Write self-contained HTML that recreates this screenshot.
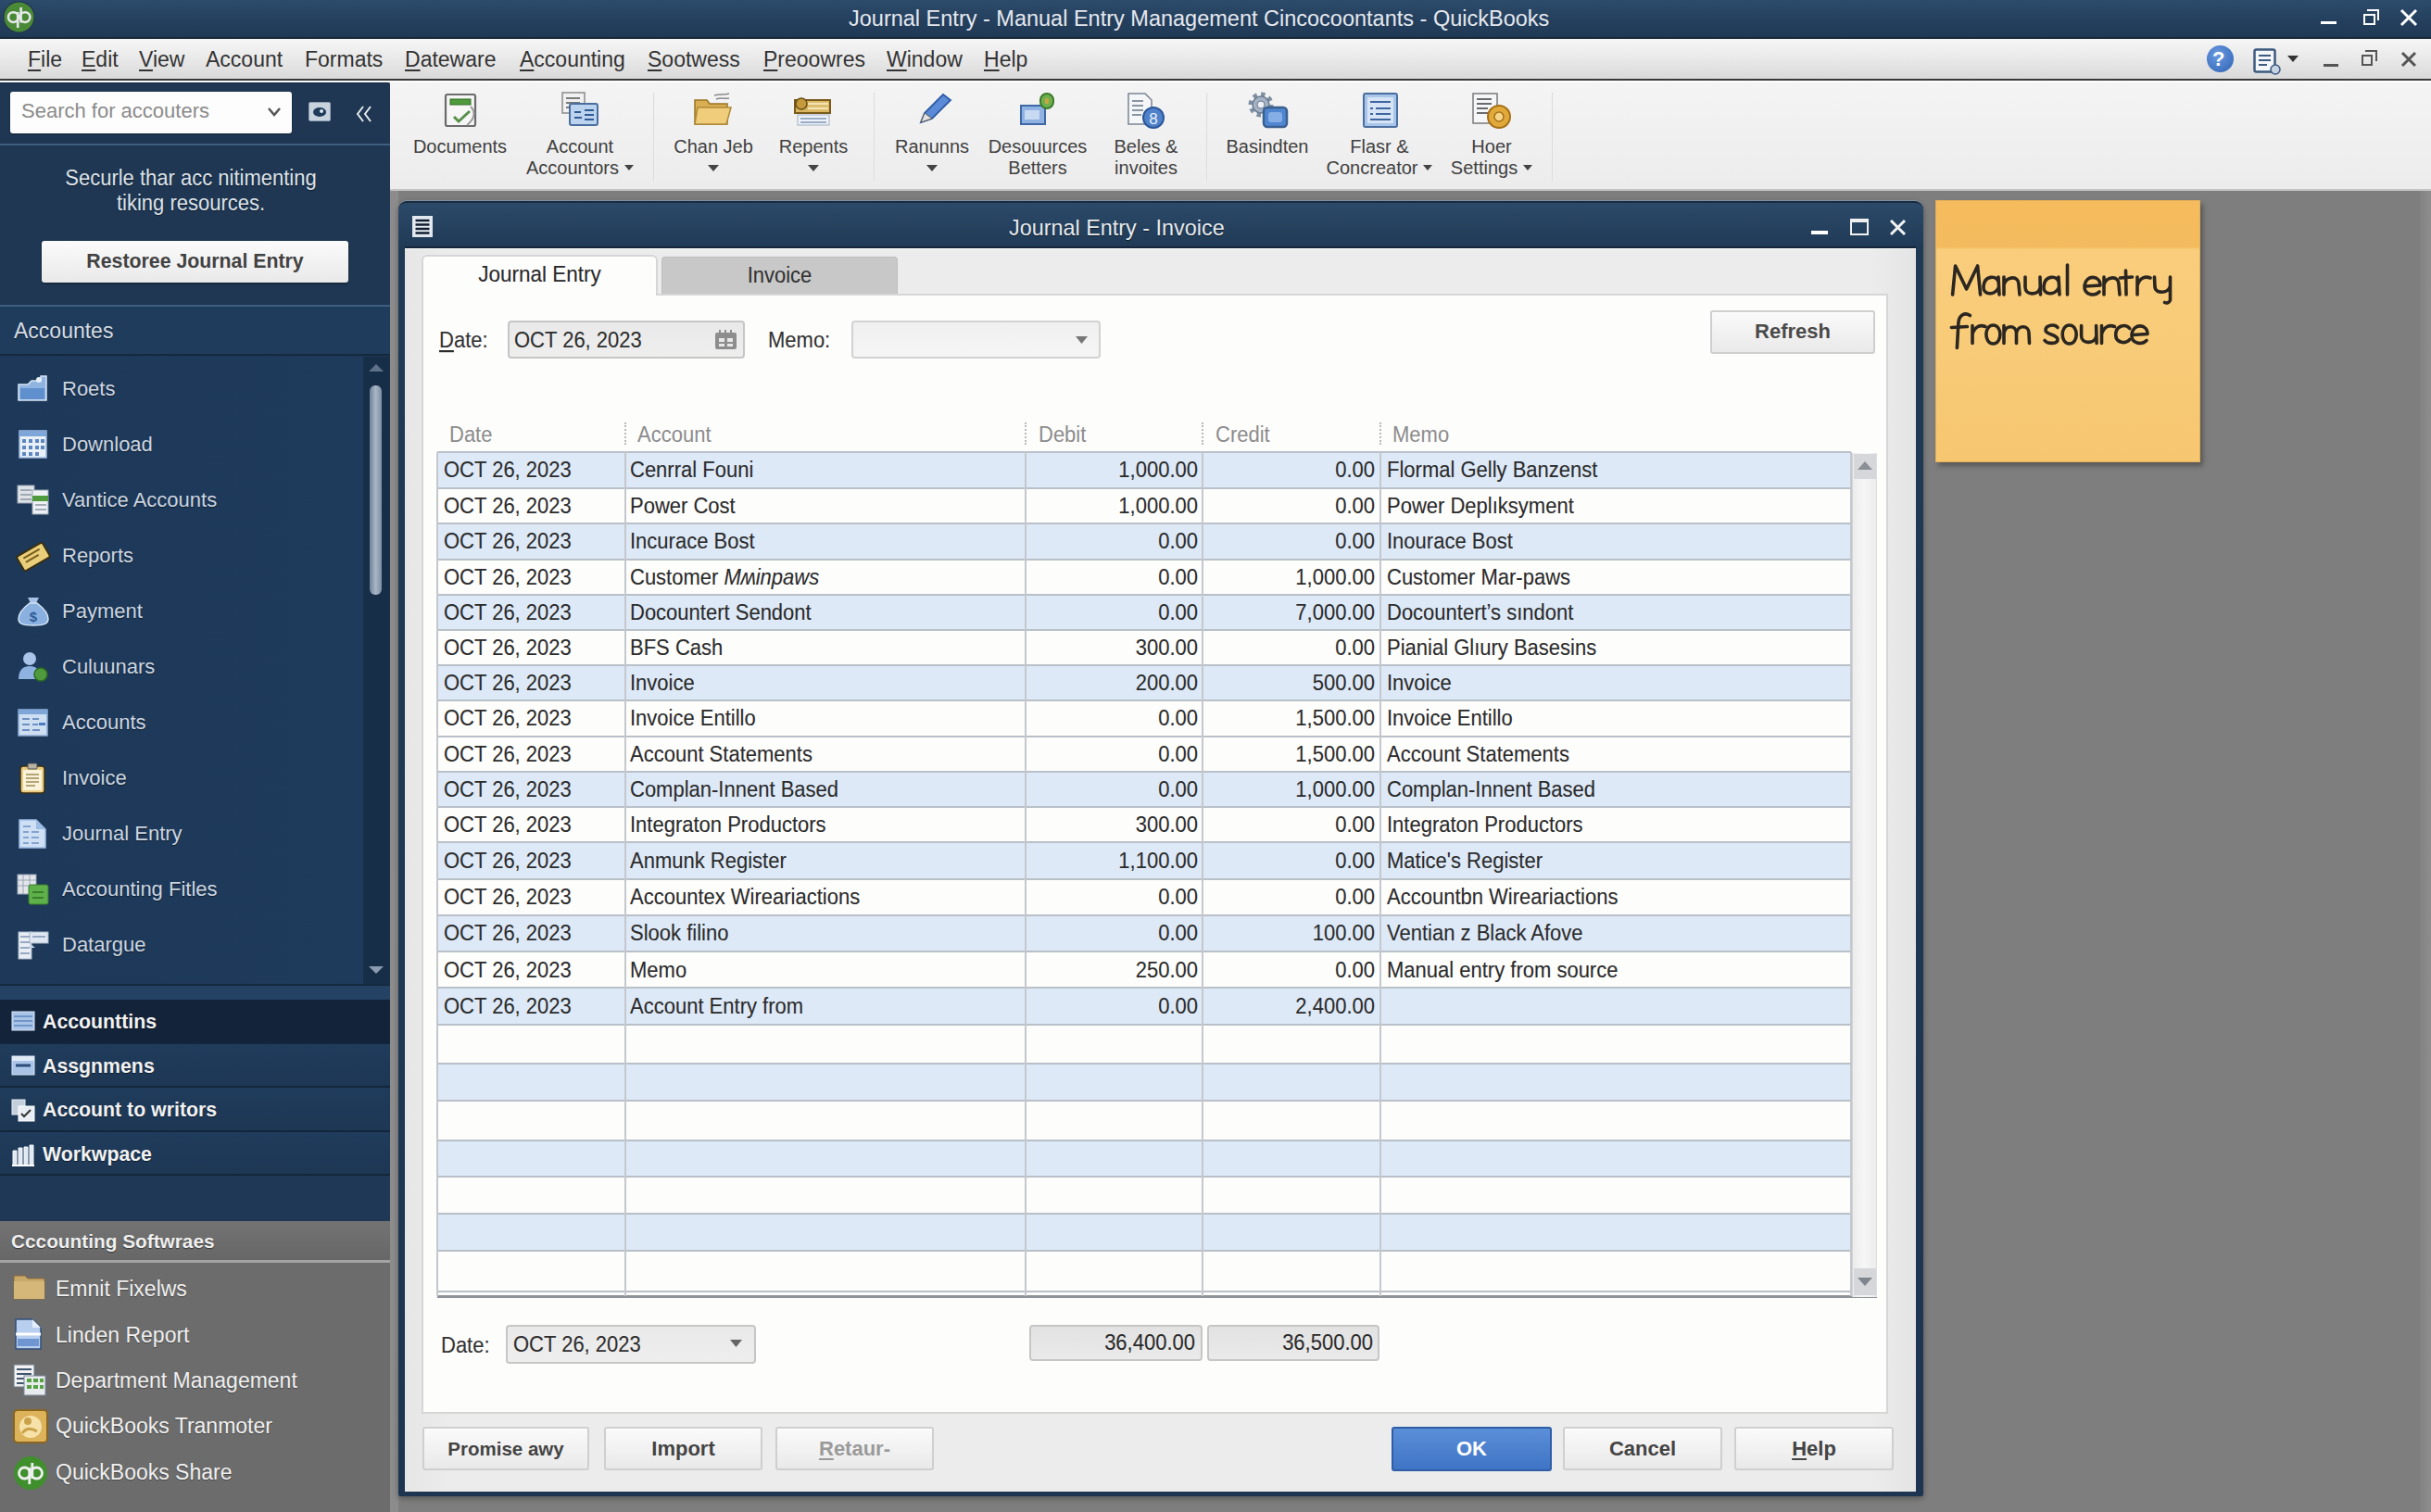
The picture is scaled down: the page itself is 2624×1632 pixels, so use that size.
<!DOCTYPE html>
<html><head><meta charset="utf-8">
<style>
*{box-sizing:border-box;margin:0;padding:0}
html,body{width:2624px;height:1632px;overflow:hidden;background:#7d7d7d;font-family:"Liberation Sans",sans-serif}
.a{position:absolute}
.nw{white-space:nowrap}
svg{position:absolute;overflow:visible}
#title{left:0;top:0;width:2624px;height:42px;background:linear-gradient(#2c4b6b,#243f5d 60%,#1f3955);border-bottom:2px solid #17283a}
#menubar{left:0;top:42px;width:2624px;height:45px;background:linear-gradient(#f6f6f6,#e6e6e6 60%,#d9d9d9);border-bottom:2px solid #3a3a3a}
.mi{top:51px;font-size:23px;line-height:26px;color:#333;white-space:nowrap}
.ul{text-decoration:underline;text-decoration-thickness:2px;text-underline-offset:3px}
#side{left:0;top:89px;width:421px;height:1543px;background:#1f3753;border-radius:0 4px 0 0;box-shadow:inset 0 1px 0 #13263c}
#tool{left:421px;top:87px;width:2203px;height:119px;border-top:2px solid #fdfdfd;background:linear-gradient(#f4f4f4,#ececec);border-bottom:2px solid #c4c4c4}
#maingray{left:421px;top:206px;width:2203px;height:1426px;background:#7e7e7e;border-left:9px solid #8c8c8c}
.st{font-size:22px;line-height:26px;color:#ccd6e1;white-space:nowrap;text-shadow:0 1px 1px rgba(0,0,0,.5)}
.sb{font-size:21.3px;line-height:26px;color:#f2f2f2;white-space:nowrap;font-weight:700;text-shadow:0 1px 1px rgba(0,0,0,.5)}
.sg{font-size:23px;line-height:26px;color:#f0f0f0;white-space:nowrap;text-shadow:0 1px 1px rgba(0,0,0,.35)}
.tt{font-size:20px;line-height:22px;color:#414141;white-space:nowrap;text-align:center}
.dd{display:inline-block;width:0;height:0;border-left:5px solid transparent;border-right:5px solid transparent;border-top:6px solid #444;vertical-align:middle;margin-left:6px;position:relative;top:-2px}
.dt{font-size:22px;line-height:26px;color:#2b2b2b;white-space:nowrap;transform:scaleY(1.1);-webkit-text-stroke:0.1px #2b2b2b}
.hd{font-size:22px;line-height:26px;color:#8c8c8c;white-space:nowrap;transform:scaleY(1.09)}
.btn{background:linear-gradient(#fafafa,#e9e9e9);border:2px solid #cfcfcf;border-radius:3px;box-shadow:inset 0 1px 0 #fff}
.bt{font-size:22px;line-height:26px;font-weight:700;color:#474747;white-space:nowrap;text-align:center}
.fld{background:linear-gradient(#e9e9e9,#eeeeee);border:2px solid #c6c6c6;border-radius:4px}

</style></head><body>
<div id="title" class="a"></div>
<div class="a nw" style="left:916px;top:6px;font-size:23.5px;line-height:28px;color:#e4e8ee">Journal Entry - Manual Entry Management Cincocoontants - QuickBooks</div>
<!-- qb logo -->
<svg style="left:0;top:0" width="42" height="40"><circle cx="20.5" cy="18.4" r="17.2" fill="#22364e"/><circle cx="20.5" cy="18.4" r="16" fill="#4a8a36"/><g fill="none" stroke="#e6e8ea" stroke-width="2.6"><circle cx="14.4" cy="18.6" r="5.4"/><path d="M19.2 13v17"/><circle cx="27" cy="18.6" r="5.4"/><path d="M22.6 8v16.5"/></g></svg>
<!-- window controls -->
<div class="a" style="left:2505px;top:23px;width:17px;height:3px;background:#fff"></div>
<div class="a" style="left:2551px;top:15px;width:13px;height:12px;border:2px solid #fff"></div>
<div class="a" style="left:2555px;top:10px;width:13px;height:12px;border-top:2px solid #fff;border-right:2px solid #fff"></div>
<svg style="left:2591px;top:10px" width="18" height="18"><path d="M1 1L17 17M17 1L1 17" stroke="#fff" stroke-width="3"/></svg>
<div id="menubar" class="a"></div>
<div class="a" style="left:0;top:87px;width:2624px;height:2px;background:#f6f8fa"></div>
<div class="a mi" style="left:30px"><span class="ul">F</span>ile</div>
<div class="a mi" style="left:88px"><span class="ul">E</span>dit</div>
<div class="a mi" style="left:150px"><span class="ul">V</span>iew</div>
<div class="a mi" style="left:222px">Account</div>
<div class="a mi" style="left:329px">Formats</div>
<div class="a mi" style="left:437px"><span class="ul">D</span>ateware</div>
<div class="a mi" style="left:561px"><span class="ul">A</span>ccounting</div>
<div class="a mi" style="left:699px"><span class="ul">S</span>ootwess</div>
<div class="a mi" style="left:824px"><span class="ul">P</span>reoowres</div>
<div class="a mi" style="left:957px"><span class="ul">W</span>indow</div>
<div class="a mi" style="left:1062px"><span class="ul">H</span>elp</div>
<!-- menubar right icons -->
<div class="a" style="left:2382px;top:49px;width:29px;height:29px;border-radius:50%;background:radial-gradient(circle at 40% 35%,#6a9ae0,#2d62b5)"></div>
<div class="a nw" style="left:2388px;top:50px;font-size:22px;font-weight:700;color:#fff;line-height:28px">?</div>
<svg style="left:2432px;top:51px" width="32" height="30"><rect x="1.5" y="2.5" width="22" height="24" rx="2" fill="#f4f6fa" stroke="#3d5a80" stroke-width="2.5"/><path d="M6 9h13M6 14h13M6 19h9" stroke="#3d5a80" stroke-width="2"/><circle cx="24" cy="24" r="5" fill="#c8d4e4" stroke="#3d5a80" stroke-width="1.5"/></svg>
<svg style="left:2469px;top:60px" width="13" height="8"><path d="M0 0h12L6 7z" fill="#333"/></svg>
<div class="a" style="left:2508px;top:69px;width:16px;height:3px;background:#555"></div>
<div class="a" style="left:2549px;top:59px;width:12px;height:12px;border:2px solid #555"></div>
<div class="a" style="left:2553px;top:54px;width:13px;height:12px;border-top:2px solid #555;border-right:2px solid #555"></div>
<svg style="left:2592px;top:56px" width="16" height="16"><path d="M1 1L15 15M15 1L1 15" stroke="#555" stroke-width="3"/></svg>
<div id="side" class="a"></div>
<!-- search -->
<div class="a" style="left:11px;top:99px;width:304px;height:45px;background:#fdfdfd;border-radius:3px;box-shadow:0 1px 2px rgba(0,0,0,.4)"></div>
<div class="a nw" style="left:23px;top:107px;font-size:22px;line-height:26px;color:#8b8b8b">Search for accouters</div>
<svg style="left:289px;top:115px" width="14" height="12"><path d="M1 2L7 9L13 2" stroke="#555" stroke-width="2.5" fill="none"/></svg>
<div class="a" style="left:333px;top:110px;width:24px;height:21px;background:#c9d3de;border-radius:2px;border:1px solid #8fa0b3"></div>
<svg style="left:336px;top:113px" width="18" height="15"><ellipse cx="9" cy="8" rx="7" ry="5" fill="#1e3a5a"/><circle cx="11" cy="7" r="2" fill="#dfe6ee"/></svg>
<svg style="left:384px;top:114px" width="18" height="18"><path d="M8 1L2 9L8 17M16 1L10 9L16 17" stroke="#e6ebf0" stroke-width="2" fill="none"/></svg>
<div class="a" style="left:0;top:155px;width:421px;height:2px;background:#3f5e80"></div>
<div class="a st" style="left:0;top:179px;width:412px;text-align:center;color:#dde3ea;transform:scaleY(1.1)">Securle thar acc nitimenting</div>
<div class="a st" style="left:0;top:206px;width:412px;text-align:center;color:#dde3ea;transform:scaleY(1.1)">tiking resources.</div>
<div class="a" style="left:45px;top:260px;width:331px;height:45px;background:linear-gradient(#fbfbfb,#e9e9e9);border-radius:3px;box-shadow:0 1px 2px rgba(0,0,0,.5)"></div>
<div class="a nw" style="left:45px;top:269px;width:331px;text-align:center;font-size:21.3px;line-height:26px;font-weight:700;color:#424242">Restoree Journal Entry</div>
<div class="a" style="left:0;top:329px;width:421px;height:2px;background:#3f5e80"></div>
<div class="a" style="left:0;top:331px;width:421px;height:53px;background:#1f3c5c;border-bottom:2px solid #15293f"></div>
<div class="a st" style="left:15px;top:344px;font-size:23px;color:#d6dde5">Accountes</div>
<!-- list -->
<div class="a" style="left:0;top:385px;width:392px;height:677px;background:linear-gradient(90deg,#1d3858,#1f3b5c)"></div>
<div class="a" style="left:392px;top:385px;width:29px;height:677px;background:#172e48"></div>
<svg style="left:397px;top:391px" width="18" height="12"><path d="M1 10L9 2L17 10z" fill="#5d718a"/></svg>
<div class="a" style="left:399px;top:416px;width:13px;height:226px;border-radius:6px;background:linear-gradient(90deg,#6f8299,#a9b6c5,#7b8da3)"></div>
<svg style="left:397px;top:1041px" width="18" height="12"><path d="M1 2L9 10L17 2z" fill="#8b9bb0"/></svg>
<div class="a" style="left:0;top:1062px;width:421px;height:17px;background:#244263;border-top:2px solid #15293f"></div>
<svg style="left:18px;top:403px" width="36" height="34"><path d="M2 12h10l4-4h10v-5h6v26H2z" fill="#8fb4e0" stroke="#d7e6f7" stroke-width="1.5"/><rect x="4" y="16" width="26" height="12" fill="#5f8fcc"/><circle cx="24" cy="7" r="3" fill="#e6eef8"/></svg>
<div class="a st" style="left:67px;top:407px">Roets</div>
<svg style="left:18px;top:463px" width="36" height="34"><rect x="3" y="2" width="29" height="29" fill="#e9f0f8" stroke="#9fbbe0" stroke-width="1.5"/><rect x="3" y="2" width="29" height="6" fill="#7ea6d8"/><g fill="#5d86bf"><rect x="6" y="11" width="4" height="4"/><rect x="13" y="11" width="4" height="4"/><rect x="20" y="11" width="4" height="4"/><rect x="26" y="11" width="4" height="4"/><rect x="6" y="18" width="4" height="4"/><rect x="13" y="18" width="4" height="4"/><rect x="20" y="18" width="4" height="4"/><rect x="26" y="18" width="4" height="4"/><rect x="6" y="25" width="4" height="4"/><rect x="13" y="25" width="4" height="4"/><rect x="20" y="25" width="4" height="4"/></g></svg>
<div class="a st" style="left:67px;top:467px">Download</div>
<svg style="left:18px;top:523px" width="36" height="34"><rect x="1" y="1" width="18" height="19" fill="#dfe3e8" stroke="#9aa5b3"/><rect x="17" y="6" width="17" height="26" fill="#eef1f4" stroke="#9aa5b3"/><rect x="17" y="12" width="17" height="6" fill="#4f9a3d"/><path d="M4 6h12M4 11h12M4 16h12M20 22h12M20 27h12" stroke="#8a96a5" stroke-width="1.5"/></svg>
<div class="a st" style="left:67px;top:527px">Vantice Accounts</div>
<svg style="left:18px;top:583px" width="36" height="34"><g transform="rotate(-30 18 18)"><rect x="2" y="9" width="32" height="18" rx="2" fill="#e9cf7a" stroke="#3a2f12" stroke-width="2"/><path d="M8 14h20M8 19h16" stroke="#7a5e1e" stroke-width="2"/></g></svg>
<div class="a st" style="left:67px;top:587px">Reports</div>
<svg style="left:18px;top:643px" width="36" height="34"><path d="M12 2h12l-3 6h-6z" fill="#a7c2e6"/><path d="M14 8h8c8 6 12 12 12 17 0 5-4 7-16 7S2 30 2 25c0-5 4-11 12-17z" fill="#8ab0e0" stroke="#d6e4f5" stroke-width="1.5"/><text x="18" y="28" font-size="15" font-family="Liberation Sans" font-weight="700" text-anchor="middle" fill="#2f5c99">$</text></svg>
<div class="a st" style="left:67px;top:647px">Payment</div>
<svg style="left:18px;top:703px" width="36" height="34"><circle cx="14" cy="8" r="7" fill="#a9c4e8"/><path d="M2 30c0-10 5-14 12-14s12 4 12 14z" fill="#8fb3e0"/><circle cx="26" cy="25" r="7" fill="#4f9a3d" stroke="#2c6b20" stroke-width="1.5"/></svg>
<div class="a st" style="left:67px;top:707px">Culuunars</div>
<svg style="left:18px;top:763px" width="36" height="34"><rect x="2" y="3" width="31" height="28" fill="#cfdff2" stroke="#8eaed6" stroke-width="1.5"/><rect x="2" y="3" width="31" height="5" fill="#7ea6d8"/><path d="M6 13h8M17 13h7M6 19h8M17 19h6M6 25h8M17 25h8" stroke="#6d90c0" stroke-width="2"/><rect x="24" y="17" width="7" height="3" fill="#4d7bc0"/></svg>
<div class="a st" style="left:67px;top:767px">Accounts</div>
<svg style="left:18px;top:823px" width="36" height="34"><rect x="4" y="4" width="26" height="29" rx="3" fill="#e9cf85" stroke="#3c2f10" stroke-width="1.5"/><rect x="7" y="8" width="20" height="22" fill="#fbf3d9"/><rect x="12" y="1" width="10" height="6" rx="1" fill="#b9b3a4" stroke="#555" /><path d="M10 13h14M10 17h14M10 21h14M10 25h10" stroke="#9c8a5a" stroke-width="1.5"/></svg>
<div class="a st" style="left:67px;top:827px">Invoice</div>
<svg style="left:18px;top:883px" width="36" height="34"><path d="M3 2h18l10 10v20H3z" fill="#cfe0f5" stroke="#9dbbe3" stroke-width="1.5"/><path d="M21 2v10h10" fill="#9dbbe3"/><path d="M7 9h8M7 15h6M16 15h8M7 21h6M16 21h8M7 27h6M16 27h8" stroke="#6d90c0" stroke-width="1.5"/></svg>
<div class="a st" style="left:67px;top:887px">Journal Entry</div>
<svg style="left:18px;top:943px" width="36" height="34"><rect x="1" y="1" width="20" height="21" fill="#e2e6eb" stroke="#9aa5b3"/><path d="M1 7h20M1 13h20M7 1v21M14 1v21" stroke="#9aa5b3"/><rect x="13" y="12" width="21" height="21" rx="2" fill="#5eb04a" stroke="#3a7d2b"/><path d="M17 20h12M17 26h12" stroke="#2f6e22" stroke-width="1.5"/></svg>
<div class="a st" style="left:67px;top:947px">Accounting Fitles</div>
<svg style="left:18px;top:1003px" width="36" height="34"><rect x="2" y="3" width="14" height="29" fill="#e9eef5" stroke="#a8b6c8"/><rect x="14" y="3" width="20" height="12" fill="#dfe7f1" stroke="#a8b6c8"/><path d="M4 8h10M4 14h10M4 20h10M4 26h10M17 8h14" stroke="#7d93b0" stroke-width="1.5"/><path d="M14 15l6 5h-6z" fill="#c9d5e4"/></svg>
<div class="a st" style="left:67px;top:1007px">Datargue</div>
<div class="a" style="left:0;top:1079px;width:421px;height:48px;background:#13233a;border-bottom:2px solid #13263b"></div>
<svg style="left:12px;top:1091px" width="26" height="24"><rect x="1" y="1" width="24" height="20" fill="#a9c4e6" stroke="#d8e5f5"/><path d="M3 6h20M3 11h20M3 16h20" stroke="#5d86bf" stroke-width="1.3"/></svg>
<div class="a sb" style="left:46px;top:1090px">Accounttins</div>
<div class="a" style="left:0;top:1127px;width:421px;height:47px;background:linear-gradient(#203c5c,#1d3754);border-bottom:2px solid #13263b"></div>
<svg style="left:12px;top:1139px" width="26" height="24"><rect x="1" y="1" width="24" height="20" fill="#a9c4e6" stroke="#d8e5f5"/><rect x="1" y="1" width="24" height="5" fill="#e0eaf6"/><path d="M5 11h16" stroke="#2b4d7a" stroke-width="3"/></svg>
<div class="a sb" style="left:46px;top:1138px">Assgnmens</div>
<div class="a" style="left:0;top:1174px;width:421px;height:48px;background:linear-gradient(#203c5c,#1d3754);border-bottom:2px solid #13263b"></div>
<svg style="left:12px;top:1186px" width="26" height="24"><rect x="1" y="1" width="14" height="16" fill="#c3cfdd" stroke="#e6ecf3"/><rect x="8" y="8" width="17" height="16" fill="#e9eef4" stroke="#fff"/><path d="M11 16l3 3 7-7" stroke="#333" stroke-width="2" fill="none"/></svg>
<div class="a sb" style="left:46px;top:1185px">Account to writors</div>
<div class="a" style="left:0;top:1222px;width:421px;height:47px;background:linear-gradient(#203c5c,#1d3754);border-bottom:2px solid #13263b"></div>
<svg style="left:12px;top:1234px" width="26" height="24"><path d="M2 24V8h4v16M8 24V5h4v19M14 24V4h4v20M20 24V2h4v22" fill="#dfe8f3" stroke="#f4f7fb"/><path d="M1 24h24" stroke="#fff" stroke-width="2"/></svg>
<div class="a sb" style="left:46px;top:1233px">Workwpace</div>
<div class="a" style="left:0;top:1269px;width:421px;height:49px;background:#1f3855"></div>
<div class="a" style="left:0;top:1318px;width:421px;height:314px;background:#6c6c6c"></div>
<div class="a" style="left:0;top:1318px;width:421px;height:45px;background:linear-gradient(#737373,#676767);border-bottom:3px solid #a3a3a3"></div>
<div class="a sb" style="left:12px;top:1327px;font-size:20.8px;color:#efefef">Cccounting Softwraes</div>
<svg style="left:14px;top:1373px" width="38" height="37"><path d="M1 4h12l3 3h18v22H1z" fill="#c9a96a" stroke="#8a6a35"/><rect x="1" y="10" width="33" height="19" fill="#d6b77a"/></svg>
<div class="a sg" style="left:60px;top:1378px">Emnit Fixelws</div>
<svg style="left:14px;top:1423px" width="38" height="37"><path d="M3 1h18l9 9v23H3z" fill="#b8cff0" stroke="#2f4f7a" stroke-width="1.5"/><path d="M21 1v9h9" fill="#e6eef9"/><path d="M3 17h27" stroke="#fff" stroke-width="3"/><rect x="5" y="22" width="23" height="8" fill="#6f96d0"/></svg>
<div class="a sg" style="left:60px;top:1428px">Linden Report</div>
<svg style="left:14px;top:1472px" width="38" height="37"><rect x="1" y="1" width="22" height="24" fill="#f1f1f1" stroke="#6a7a8c"/><path d="M4 6h16M4 11h16M4 16h16M4 21h16" stroke="#3f556f" stroke-width="2"/><rect x="12" y="13" width="23" height="21" fill="#e9ecef" stroke="#7a8899"/><g fill="#55a244"><rect x="15" y="16" width="5" height="4"/><rect x="22" y="16" width="5" height="4"/><rect x="29" y="16" width="4" height="4"/><rect x="15" y="23" width="5" height="4"/><rect x="22" y="23" width="5" height="4"/><rect x="29" y="23" width="4" height="4"/></g></svg>
<div class="a sg" style="left:60px;top:1477px">Department Management</div>
<svg style="left:14px;top:1521px" width="38" height="37"><rect x="1" y="1" width="36" height="35" rx="4" fill="#dcb25a" stroke="#8a6520" stroke-width="2"/><circle cx="19" cy="19" r="12" fill="#f6e2a8"/><circle cx="16" cy="13" r="4" fill="#c9a24a"/><path d="M10 26c4-6 10-6 16-2" stroke="#c9a24a" stroke-width="3" fill="none"/></svg>
<div class="a sg" style="left:60px;top:1526px">QuickBooks Tranmoter</div>
<svg style="left:14px;top:1571px" width="38" height="37"><circle cx="19" cy="19" r="18" fill="#3f8f2d"/><g fill="none" stroke="#eef0f0" stroke-width="2.8"><circle cx="12.5" cy="19" r="6"/><path d="M17.8 13v18"/><circle cx="25.5" cy="19" r="6"/><path d="M20.8 8v17"/></g></svg>
<div class="a sg" style="left:60px;top:1576px">QuickBooks Share</div><div id="tool" class="a"></div>
<div id="maingray" class="a"></div>
<div class="a" style="left:705px;top:100px;width:2px;height:96px;background:linear-gradient(90deg,#d2d2d2,#fafafa)"></div>
<div class="a" style="left:943px;top:100px;width:2px;height:96px;background:linear-gradient(90deg,#d2d2d2,#fafafa)"></div>
<div class="a" style="left:1302px;top:100px;width:2px;height:96px;background:linear-gradient(90deg,#d2d2d2,#fafafa)"></div>
<div class="a" style="left:1675px;top:100px;width:2px;height:96px;background:linear-gradient(90deg,#d2d2d2,#fafafa)"></div>
<svg style="left:478px;top:99px" width="40" height="38"><rect x="3" y="3" width="32" height="34" rx="2" fill="#f6f6f6" stroke="#6b6b6b" stroke-width="2.2"/><rect x="8" y="8" width="22" height="6" fill="#4f9a3d" stroke="#2d6a22"/><path d="M12 27l5 5 12-11" stroke="#5a8f4a" stroke-width="3" fill="none"/><path d="M30 16c6 6 4 14-4 20" stroke="#9a9a9a" stroke-width="2" fill="none"/></svg>
<div class="a tt" style="left:346.5px;top:147px;width:300px">Documents</div>
<svg style="left:606px;top:99px" width="42" height="38"><rect x="1" y="1" width="24" height="22" fill="#f1f1f1" stroke="#8a8a8a" stroke-width="1.5"/><path d="M5 7h15M5 12h15M5 17h10" stroke="#7a7a7a" stroke-width="2"/><rect x="9" y="13" width="30" height="23" rx="2" fill="#bcd3f0" stroke="#4a6f9f" stroke-width="2"/><path d="M14 22h7M14 28h8M25 20h10M25 25h10M25 30h10" stroke="#2f5a91" stroke-width="2.2"/></svg>
<div class="a tt" style="left:476px;top:147px;width:300px">Account</div>
<div class="a tt" style="left:476px;top:170px;width:300px">Accountors<span class="dd"></span></div>
<svg style="left:749px;top:100px" width="42" height="36"><path d="M1 8h13l3 4h19v22H1z" fill="#d9ae52" stroke="#9b7424" stroke-width="1.5"/><path d="M4 16h36l-5 18H1z" fill="#f0cd7a" stroke="#b08a3a" stroke-width="1.5"/><path d="M22 3c5-2 10 0 16-2M24 7c5-2 9 0 14-1" stroke="#8a8a8a" stroke-width="1.5" fill="none"/></svg>
<div class="a tt" style="left:620px;top:147px;width:300px">Chan Jeb</div>
<svg style="left:764px;top:178px" width="12" height="8"><path d="M0 0h12L6 7z" fill="#444"/></svg>
<svg style="left:856px;top:100px" width="42" height="36"><rect x="2" y="8" width="38" height="14" fill="#d8b560" stroke="#7a5a1c" stroke-width="2"/><circle cx="9" cy="12" r="6" fill="#c49a3c" stroke="#6a4e18" stroke-width="1.5"/><path d="M16 12h22M16 17h22" stroke="#f2e2b0" stroke-width="2.5"/><rect x="5" y="24" width="34" height="11" fill="#eef2f7" stroke="#9fb0c6"/><path d="M8 28h28M8 32h28" stroke="#7f97b8" stroke-width="1.5"/></svg>
<div class="a tt" style="left:728px;top:147px;width:300px">Repents</div>
<svg style="left:872px;top:178px" width="12" height="8"><path d="M0 0h12L6 7z" fill="#444"/></svg>
<svg style="left:988px;top:100px" width="40" height="36"><path d="M6 32l4-10L30 2l8 6-20 20z" fill="#5b8ad6" stroke="#2d5aa6" stroke-width="1.8"/><path d="M6 32l4-10 8 6z" fill="#e2e2e2" stroke="#555"/></svg>
<div class="a tt" style="left:856px;top:147px;width:300px">Ranunns</div>
<svg style="left:1000px;top:178px" width="12" height="8"><path d="M0 0h12L6 7z" fill="#444"/></svg>
<svg style="left:1101px;top:100px" width="38" height="36"><rect x="1" y="14" width="26" height="20" fill="#8fb2e3" stroke="#3f68a6" stroke-width="2"/><rect x="5" y="19" width="16" height="10" fill="#c8daf2"/><rect x="22" y="1" width="14" height="16" rx="7" fill="#6eb04f" stroke="#3c7a2a" stroke-width="2"/><rect x="27" y="6" width="4" height="6" fill="#c7a640"/></svg>
<div class="a tt" style="left:970px;top:147px;width:300px">Desouurces</div>
<div class="a tt" style="left:970px;top:170px;width:300px">Betters</div>
<svg style="left:1216px;top:100px" width="42" height="38"><path d="M2 1h18l7 7v26H2z" fill="#f5f6f8" stroke="#7a8593" stroke-width="1.5"/><path d="M6 9h12M6 14h12M6 19h12M6 24h10" stroke="#8a95a3" stroke-width="1.8"/><circle cx="29" cy="27" r="11" fill="#4f82c9" stroke="#2b569a" stroke-width="2"/><text x="29" y="34" font-size="17" font-family="Liberation Sans" text-anchor="middle" fill="#e8f0fb">8</text></svg>
<div class="a tt" style="left:1087px;top:147px;width:300px">Beles &amp;</div>
<div class="a tt" style="left:1087px;top:170px;width:300px">invoites</div>
<svg style="left:1348px;top:100px" width="42" height="37"><circle cx="13" cy="13" r="11" fill="none" stroke="#7f8fa3" stroke-width="5" stroke-dasharray="4.3 4.3"/><circle cx="13" cy="13" r="9" fill="#a4b2c4" stroke="#6b7c92" stroke-width="1.5"/><circle cx="13" cy="13" r="4" fill="#eef1f5" stroke="#6b7c92"/><rect x="16" y="16" width="25" height="21" rx="4" fill="#4f86cf" stroke="#3a5f8f" stroke-width="2.5"/><rect x="21" y="21" width="15" height="11" rx="3" fill="#86aee6"/></svg>
<div class="a tt" style="left:1218px;top:147px;width:300px">Basindten</div>
<svg style="left:1470px;top:100px" width="40" height="38"><rect x="2" y="1" width="36" height="36" rx="2" fill="#a9c5ea" stroke="#4a6f9f" stroke-width="2"/><rect x="6" y="5" width="28" height="28" fill="#d6e4f5"/><path d="M9 10h22M9 17h3M15 17h16M9 23h3M15 23h16M9 29h22" stroke="#3c66a0" stroke-width="2"/></svg>
<div class="a tt" style="left:1339px;top:147px;width:300px">Flasr &amp;</div>
<div class="a tt" style="left:1339px;top:170px;width:300px">Concreator<span class="dd"></span></div>
<svg style="left:1588px;top:100px" width="44" height="38"><rect x="2" y="1" width="26" height="32" fill="#f5f6f8" stroke="#7a7a7a" stroke-width="1.5"/><path d="M6 7h16M6 12h16M6 17h12M6 22h12" stroke="#6a6a6a" stroke-width="2"/><circle cx="30" cy="26" r="12" fill="#e0a93a" stroke="#a56f16" stroke-width="2"/><circle cx="30" cy="26" r="5" fill="#f6d58a" stroke="#a56f16" stroke-width="1.5"/></svg>
<div class="a tt" style="left:1460px;top:147px;width:300px">Hoer</div>
<div class="a tt" style="left:1460px;top:170px;width:300px">Settings<span class="dd"></span></div><div class="a" style="left:430px;top:217px;width:1646px;height:1398px;background:linear-gradient(#2b4a69,#203a56 48px,#1d3550);border-radius:9px 9px 2px 2px;border-top:2px solid #1b2b3d;box-shadow:0 -1px 0 #7d90a4,0 2px 6px rgba(0,0,0,.35)"></div>
<svg style="left:445px;top:233px" width="22" height="23"><rect x="1" y="1" width="20" height="21" fill="#e8edf3" stroke="#dfe6ee" stroke-width="2"/><path d="M3.5 5h15M3.5 9.5h15M3.5 14h15M3.5 18.5h15" stroke="#0f1e30" stroke-width="2.4"/></svg>
<div class="a nw" style="left:1089px;top:232px;font-size:23.4px;line-height:28px;color:#e6eaef;text-shadow:0 1px 1px rgba(0,0,0,.6)">Journal Entry - Invoice</div>
<div class="a" style="left:1955px;top:249px;width:18px;height:4px;background:#fff"></div>
<div class="a" style="left:1997px;top:236px;width:20px;height:18px;border:2px solid #f0f0f0;border-top-width:4px"></div>
<svg style="left:2040px;top:237px" width="17" height="17"><path d="M1 1L16 16M16 1L1 16" stroke="#f2f2f2" stroke-width="3"/></svg>
<div class="a" style="left:437px;top:266px;width:1631px;height:2px;background:#15253a"></div>
<div class="a" style="left:437px;top:268px;width:1631px;height:1342px;border-top:1px solid #fbfbfb;background:linear-gradient(90deg,#e6e6e6,#ececec 3%,#ececec 97%,#e4e4e4)"></div>
<div class="a" style="left:714px;top:277px;width:255px;height:42px;background:#c8c8c8;border-radius:4px 4px 0 0;border:1px solid #bdbdbd;border-bottom:none"></div>
<div class="a dt" style="left:714px;top:284px;width:255px;text-align:center;font-size:22px;color:#333">Invoice</div>
<div class="a" style="left:455px;top:317px;width:1583px;height:1209px;background:#fdfdfc;border:2px solid #d6d6d6"></div>
<div class="a" style="left:455px;top:275px;width:255px;height:44px;background:#fdfdfc;border-radius:6px 6px 0 0;border:2px solid #d6d6d6;border-bottom:none"></div>
<div class="a" style="left:457px;top:316px;width:251px;height:4px;background:#fdfdfc"></div>
<div class="a dt" style="left:455px;top:283px;width:255px;text-align:center;font-size:22.5px;color:#2a2a2a">Journal Entry</div>
<div class="a dt" style="left:474px;top:354px;color:#333"><span class="ul">D</span>ate:</div>
<div class="a fld" style="left:548px;top:346px;width:256px;height:41px"></div>
<div class="a dt" style="left:555px;top:354px;color:#2e2e2e">OCT 26, 2023</div>
<svg style="left:771px;top:356px" width="25" height="22"><rect x="1" y="3" width="23" height="18" rx="2" fill="#8d8d8d"/><g fill="#e8e8e8"><rect x="5" y="9" width="6" height="4"/><rect x="14" y="9" width="6" height="4"/><rect x="5" y="15" width="6" height="3"/><rect x="14" y="15" width="6" height="3"/></g><path d="M6 0v5M12 0v5M18 0v5" stroke="#8d8d8d" stroke-width="2"/></svg>
<div class="a dt" style="left:829px;top:354px;color:#333">Memo:</div>
<div class="a fld" style="left:919px;top:346px;width:269px;height:41px;background:linear-gradient(#f0f0f0,#f5f5f5);border-color:#d2d2d2"></div>
<svg style="left:1161px;top:363px" width="14" height="9"><path d="M0 0h13L6.5 8z" fill="#777"/></svg>
<div class="a btn" style="left:1846px;top:335px;width:178px;height:47px"></div>
<div class="a bt" style="left:1846px;top:345px;width:178px;color:#4a4a4a">Refresh</div>
<div class="a hd" style="left:485px;top:456px">Date</div>
<div class="a hd" style="left:688px;top:456px">Account</div>
<div class="a hd" style="left:1121px;top:456px">Debit</div>
<div class="a hd" style="left:1312px;top:456px">Credit</div>
<div class="a hd" style="left:1503px;top:456px">Memo</div>
<div class="a" style="left:674px;top:456px;width:0;height:24px;border-left:2px dotted #b9b9b9"></div>
<div class="a" style="left:1106px;top:456px;width:0;height:24px;border-left:2px dotted #b9b9b9"></div>
<div class="a" style="left:1297px;top:456px;width:0;height:24px;border-left:2px dotted #b9b9b9"></div>
<div class="a" style="left:1489px;top:456px;width:0;height:24px;border-left:2px dotted #b9b9b9"></div>
<div class="a" style="left:472px;top:488px;width:1526px;height:912px;background:#fdfdfc"></div>
<div class="a" style="left:472px;top:488px;width:1526px;height:39px;background:#dde9f7"></div>
<div class="a" style="left:472px;top:565px;width:1526px;height:39px;background:#dde9f7"></div>
<div class="a" style="left:472px;top:642px;width:1526px;height:38px;background:#dde9f7"></div>
<div class="a" style="left:472px;top:718px;width:1526px;height:38px;background:#dde9f7"></div>
<div class="a" style="left:472px;top:833px;width:1526px;height:38px;background:#dde9f7"></div>
<div class="a" style="left:472px;top:909px;width:1526px;height:40px;background:#dde9f7"></div>
<div class="a" style="left:472px;top:988px;width:1526px;height:39px;background:#dde9f7"></div>
<div class="a" style="left:472px;top:1066px;width:1526px;height:40px;background:#dde9f7"></div>
<div class="a" style="left:472px;top:1148px;width:1526px;height:40px;background:#dde9f7"></div>
<div class="a" style="left:472px;top:1231px;width:1526px;height:39px;background:#dde9f7"></div>
<div class="a" style="left:472px;top:1310px;width:1526px;height:40px;background:#dde9f7"></div>
<div class="a" style="left:472px;top:487px;width:1526px;height:2px;background:#b9c0c8"></div>
<div class="a" style="left:472px;top:526px;width:1526px;height:2px;background:#b9c0c8"></div>
<div class="a" style="left:472px;top:564px;width:1526px;height:2px;background:#b9c0c8"></div>
<div class="a" style="left:472px;top:603px;width:1526px;height:2px;background:#b9c0c8"></div>
<div class="a" style="left:472px;top:641px;width:1526px;height:2px;background:#b9c0c8"></div>
<div class="a" style="left:472px;top:679px;width:1526px;height:2px;background:#b9c0c8"></div>
<div class="a" style="left:472px;top:717px;width:1526px;height:2px;background:#b9c0c8"></div>
<div class="a" style="left:472px;top:755px;width:1526px;height:2px;background:#b9c0c8"></div>
<div class="a" style="left:472px;top:794px;width:1526px;height:2px;background:#b9c0c8"></div>
<div class="a" style="left:472px;top:832px;width:1526px;height:2px;background:#b9c0c8"></div>
<div class="a" style="left:472px;top:870px;width:1526px;height:2px;background:#b9c0c8"></div>
<div class="a" style="left:472px;top:908px;width:1526px;height:2px;background:#b9c0c8"></div>
<div class="a" style="left:472px;top:948px;width:1526px;height:2px;background:#b9c0c8"></div>
<div class="a" style="left:472px;top:987px;width:1526px;height:2px;background:#b9c0c8"></div>
<div class="a" style="left:472px;top:1026px;width:1526px;height:2px;background:#b9c0c8"></div>
<div class="a" style="left:472px;top:1065px;width:1526px;height:2px;background:#b9c0c8"></div>
<div class="a" style="left:472px;top:1105px;width:1526px;height:2px;background:#b9c0c8"></div>
<div class="a" style="left:472px;top:1147px;width:1526px;height:2px;background:#b9c0c8"></div>
<div class="a" style="left:472px;top:1187px;width:1526px;height:2px;background:#b9c0c8"></div>
<div class="a" style="left:472px;top:1230px;width:1526px;height:2px;background:#b9c0c8"></div>
<div class="a" style="left:472px;top:1269px;width:1526px;height:2px;background:#b9c0c8"></div>
<div class="a" style="left:472px;top:1309px;width:1526px;height:2px;background:#b9c0c8"></div>
<div class="a" style="left:472px;top:1349px;width:1526px;height:2px;background:#b9c0c8"></div>
<div class="a" style="left:472px;top:1393px;width:1526px;height:2px;background:#b9c0c8"></div>
<div class="a" style="left:472px;top:1398px;width:1554px;height:3px;background:#8e9399"></div>
<div class="a" style="left:471px;top:488px;width:2px;height:911px;background:#c4c8cd"></div>
<div class="a" style="left:674px;top:488px;width:2px;height:911px;background:#c4c8cd"></div>
<div class="a" style="left:1106px;top:488px;width:2px;height:911px;background:#c4c8cd"></div>
<div class="a" style="left:1297px;top:488px;width:2px;height:911px;background:#c4c8cd"></div>
<div class="a" style="left:1489px;top:488px;width:2px;height:911px;background:#c4c8cd"></div>
<div class="a" style="left:1997px;top:488px;width:2px;height:911px;background:#c4c8cd"></div>
<div class="a dt" style="left:479px;top:494px">OCT 26, 2023</div>
<div class="a dt" style="left:680px;top:494px">Cenrral Founi</div>
<div class="a dt" style="left:1000px;top:494px;width:293px;text-align:right">1,000.00</div>
<div class="a dt" style="left:1190px;top:494px;width:294px;text-align:right">0.00</div>
<div class="a dt" style="left:1497px;top:494px">Flormal Gelly Banzenst</div>
<div class="a dt" style="left:479px;top:533px">OCT 26, 2023</div>
<div class="a dt" style="left:680px;top:533px">Power Cost</div>
<div class="a dt" style="left:1000px;top:533px;width:293px;text-align:right">1,000.00</div>
<div class="a dt" style="left:1190px;top:533px;width:294px;text-align:right">0.00</div>
<div class="a dt" style="left:1497px;top:533px">Power Deplıksyment</div>
<div class="a dt" style="left:479px;top:571px">OCT 26, 2023</div>
<div class="a dt" style="left:680px;top:571px">Incurace Bost</div>
<div class="a dt" style="left:1000px;top:571px;width:293px;text-align:right">0.00</div>
<div class="a dt" style="left:1190px;top:571px;width:294px;text-align:right">0.00</div>
<div class="a dt" style="left:1497px;top:571px">Inourace Bost</div>
<div class="a dt" style="left:479px;top:610px">OCT 26, 2023</div>
<div class="a dt" style="left:680px;top:610px">Customer <i>Mʍinpaws</i></div>
<div class="a dt" style="left:1000px;top:610px;width:293px;text-align:right">0.00</div>
<div class="a dt" style="left:1190px;top:610px;width:294px;text-align:right">1,000.00</div>
<div class="a dt" style="left:1497px;top:610px">Customer Mar-paws</div>
<div class="a dt" style="left:479px;top:648px">OCT 26, 2023</div>
<div class="a dt" style="left:680px;top:648px">Docountert Sendont</div>
<div class="a dt" style="left:1000px;top:648px;width:293px;text-align:right">0.00</div>
<div class="a dt" style="left:1190px;top:648px;width:294px;text-align:right">7,000.00</div>
<div class="a dt" style="left:1497px;top:648px">Docountert’s sındont</div>
<div class="a dt" style="left:479px;top:686px">OCT 26, 2023</div>
<div class="a dt" style="left:680px;top:686px">BFS Cash</div>
<div class="a dt" style="left:1000px;top:686px;width:293px;text-align:right">300.00</div>
<div class="a dt" style="left:1190px;top:686px;width:294px;text-align:right">0.00</div>
<div class="a dt" style="left:1497px;top:686px">Pianial Glıury Basesins</div>
<div class="a dt" style="left:479px;top:724px">OCT 26, 2023</div>
<div class="a dt" style="left:680px;top:724px">Invoice</div>
<div class="a dt" style="left:1000px;top:724px;width:293px;text-align:right">200.00</div>
<div class="a dt" style="left:1190px;top:724px;width:294px;text-align:right">500.00</div>
<div class="a dt" style="left:1497px;top:724px">Invoice</div>
<div class="a dt" style="left:479px;top:762px">OCT 26, 2023</div>
<div class="a dt" style="left:680px;top:762px">Invoice Entillo</div>
<div class="a dt" style="left:1000px;top:762px;width:293px;text-align:right">0.00</div>
<div class="a dt" style="left:1190px;top:762px;width:294px;text-align:right">1,500.00</div>
<div class="a dt" style="left:1497px;top:762px">Invoice Entillo</div>
<div class="a dt" style="left:479px;top:801px">OCT 26, 2023</div>
<div class="a dt" style="left:680px;top:801px">Account Statements</div>
<div class="a dt" style="left:1000px;top:801px;width:293px;text-align:right">0.00</div>
<div class="a dt" style="left:1190px;top:801px;width:294px;text-align:right">1,500.00</div>
<div class="a dt" style="left:1497px;top:801px">Account Statements</div>
<div class="a dt" style="left:479px;top:839px">OCT 26, 2023</div>
<div class="a dt" style="left:680px;top:839px">Complan-Innent Based</div>
<div class="a dt" style="left:1000px;top:839px;width:293px;text-align:right">0.00</div>
<div class="a dt" style="left:1190px;top:839px;width:294px;text-align:right">1,000.00</div>
<div class="a dt" style="left:1497px;top:839px">Complan-Innent Based</div>
<div class="a dt" style="left:479px;top:877px">OCT 26, 2023</div>
<div class="a dt" style="left:680px;top:877px">Integraton Productors</div>
<div class="a dt" style="left:1000px;top:877px;width:293px;text-align:right">300.00</div>
<div class="a dt" style="left:1190px;top:877px;width:294px;text-align:right">0.00</div>
<div class="a dt" style="left:1497px;top:877px">Integraton Productors</div>
<div class="a dt" style="left:479px;top:916px">OCT 26, 2023</div>
<div class="a dt" style="left:680px;top:916px">Anmunk Register</div>
<div class="a dt" style="left:1000px;top:916px;width:293px;text-align:right">1,100.00</div>
<div class="a dt" style="left:1190px;top:916px;width:294px;text-align:right">0.00</div>
<div class="a dt" style="left:1497px;top:916px">Matice's Register</div>
<div class="a dt" style="left:479px;top:955px">OCT 26, 2023</div>
<div class="a dt" style="left:680px;top:955px">Accountex Wireariactions</div>
<div class="a dt" style="left:1000px;top:955px;width:293px;text-align:right">0.00</div>
<div class="a dt" style="left:1190px;top:955px;width:294px;text-align:right">0.00</div>
<div class="a dt" style="left:1497px;top:955px">Accountbn Wireariactions</div>
<div class="a dt" style="left:479px;top:994px">OCT 26, 2023</div>
<div class="a dt" style="left:680px;top:994px">Slook filino</div>
<div class="a dt" style="left:1000px;top:994px;width:293px;text-align:right">0.00</div>
<div class="a dt" style="left:1190px;top:994px;width:294px;text-align:right">100.00</div>
<div class="a dt" style="left:1497px;top:994px">Ventian z Black Afove</div>
<div class="a dt" style="left:479px;top:1034px">OCT 26, 2023</div>
<div class="a dt" style="left:680px;top:1034px">Memo</div>
<div class="a dt" style="left:1000px;top:1034px;width:293px;text-align:right">250.00</div>
<div class="a dt" style="left:1190px;top:1034px;width:294px;text-align:right">0.00</div>
<div class="a dt" style="left:1497px;top:1034px">Manual entry from source</div>
<div class="a dt" style="left:479px;top:1073px">OCT 26, 2023</div>
<div class="a dt" style="left:680px;top:1073px">Account Entry from</div>
<div class="a dt" style="left:1000px;top:1073px;width:293px;text-align:right">0.00</div>
<div class="a dt" style="left:1190px;top:1073px;width:294px;text-align:right">2,400.00</div>
<div class="a dt" style="left:1497px;top:1073px"></div>
<div class="a" style="left:1999px;top:489px;width:27px;height:911px;background:linear-gradient(90deg,#ececec,#f6f6f6,#ececec);border-left:1px solid #d4d4d4;border-right:1px solid #dedede"></div>
<div class="a" style="left:2001px;top:490px;width:24px;height:27px;background:#d5d7da"></div>
<svg style="left:2004px;top:496px" width="18" height="12"><path d="M1 11L9 2L17 11z" fill="#8a8f96"/></svg>
<div class="a" style="left:2001px;top:1369px;width:24px;height:29px;background:#d5d7da"></div>
<svg style="left:2004px;top:1378px" width="18" height="12"><path d="M1 1L9 10L17 1z" fill="#7f858c"/></svg>
<div class="a dt" style="left:476px;top:1439px;color:#333">Date:</div>
<div class="a fld" style="left:546px;top:1430px;width:270px;height:42px"></div>
<div class="a dt" style="left:554px;top:1438px;color:#2e2e2e">OCT 26, 2023</div>
<svg style="left:788px;top:1446px" width="14" height="9"><path d="M0 0h13L6.5 8z" fill="#666"/></svg>
<div class="a fld" style="left:1111px;top:1430px;width:187px;height:39px;background:linear-gradient(#e2e2e2,#eaeaea)"></div>
<div class="a dt" style="left:1111px;top:1436px;width:179px;text-align:right">36,400.00</div>
<div class="a fld" style="left:1303px;top:1430px;width:186px;height:39px;background:linear-gradient(#e2e2e2,#eaeaea)"></div>
<div class="a dt" style="left:1303px;top:1436px;width:179px;text-align:right">36,500.00</div>
<div class="a btn" style="left:456px;top:1540px;width:180px;height:47px"></div>
<div class="a bt" style="left:456px;top:1551px;width:180px;color:#444"><span style="font-size:20.5px">Promise awy</span></div>
<div class="a btn" style="left:652px;top:1540px;width:171px;height:47px"></div>
<div class="a bt" style="left:652px;top:1551px;width:171px;color:#444">Import</div>
<div class="a btn" style="left:837px;top:1540px;width:171px;height:47px"></div>
<div class="a bt" style="left:837px;top:1551px;width:171px;color:#9a9a9a"><span class="ul">R</span>etaur‐</div>
<div class="a" style="left:1502px;top:1540px;width:173px;height:48px;background:linear-gradient(#5b8fd8,#3f74c6);border:2px solid #2e5ea8;border-radius:3px"></div>
<div class="a bt" style="left:1502px;top:1551px;width:173px;color:#fff">OK</div>
<div class="a btn" style="left:1687px;top:1540px;width:172px;height:47px"></div>
<div class="a bt" style="left:1687px;top:1551px;width:172px;color:#444">Cancel</div>
<div class="a btn" style="left:1872px;top:1540px;width:172px;height:47px"></div>
<div class="a bt" style="left:1872px;top:1551px;width:172px;color:#444"><span class="ul">H</span>elp</div><div class="a" style="left:2089px;top:216px;width:286px;height:283px;background:linear-gradient(#f5bb5d,#f4bb5e 50px,#f9cd7c 52px,#f8cb78 160px,#f7c670);box-shadow:3px 4px 5px rgba(0,0,0,.3);border:1px solid #e3ae5a"></div>
<svg style="left:2089px;top:216px" width="286" height="283"><g fill="none" stroke="#2b2620" stroke-width="3.6" stroke-linecap="round" stroke-linejoin="round"><path transform="translate(18.6 102)" d="M0 0 L3 -31 L15 -6 L27 -31 L30 0"/><path transform="translate(51 102)" d="M17 -14 C15 -21 2 -21 1 -9 C0 1 13 1 17 -7 M17 -19 L18 0"/><path transform="translate(73 102)" d="M1 -19 L1 0 M1 -11 C4 -20 17 -21 17 -11 L18 0"/><path transform="translate(96 102)" d="M1 -19 L1 -8 C1 1 15 1 17 -7 M17 -19 L17.5 0"/><path transform="translate(116 102)" d="M17 -14 C15 -21 2 -21 1 -9 C0 1 13 1 17 -7 M17 -19 L18 0"/><path transform="translate(140 102)" d="M2.5 -32 L2.5 0"/><path transform="translate(160 102)" d="M2 -9 L18 -10 C18 -21 3 -22 1 -10 C0 1 12 2 17 -3"/><path transform="translate(181 102)" d="M1 -19 L1 0 M1 -11 C4 -20 17 -21 17 -11 L18 0"/><path transform="translate(199.5 102)" d="M6 -26 L6.5 0 M0 -18 L13 -19"/><path transform="translate(216 102)" d="M2 -19 L2 0 M2 -10 C5 -19 11 -20 16 -18"/><path transform="translate(235.5 102)" d="M1 -19 L1.5 -8 C2 -1 15 -1 17.5 -8 M18 -19 L18 6 C17 9 14 9.5 12 8.5"/><path transform="translate(17.4 154.5)" d="M20 -30 C14 -34 8 -30 7.5 -22 L6 5 M0 -17 L17 -18"/><path transform="translate(38 154.5)" d="M2 -19 L2 0 M2 -10 C5 -19 11 -20 16 -18"/><path transform="translate(53.4 154.5)" d="M9 -19.5 C-1 -19.5 -1 0.5 9 0.5 C19 0.5 19 -19.5 9 -19.5 Z"/><path transform="translate(73 154.5)" d="M1 -19 L1 0 M1 -11 C3 -20 14 -20 14.5 -11 L14.5 0 M14.5 -11 C16 -20 28 -20 28 -11 L28.5 0"/><path transform="translate(117 154.5)" d="M15 -17 C12 -21 2 -20 2 -14 C2 -9 15 -10 15 -4 C15 1 4 1 1 -3"/><path transform="translate(135.7 154.5)" d="M9 -19.5 C-1 -19.5 -1 0.5 9 0.5 C19 0.5 19 -19.5 9 -19.5 Z"/><path transform="translate(156.6 154.5)" d="M1 -19 L1 -8 C1 1 15 1 17 -7 M17 -19 L17.5 0"/><path transform="translate(177.5 154.5)" d="M2 -19 L2 0 M2 -10 C5 -19 11 -20 16 -18"/><path transform="translate(193.7 154.5)" d="M16 -16 C12 -21 1 -20 1 -9 C1 0 12 1 16 -4"/><path transform="translate(211 154.5)" d="M2 -9 L18 -10 C18 -21 3 -22 1 -10 C0 1 12 2 17 -3"/></g></svg>
<div class="a" style="left:2612px;top:206px;width:12px;height:1426px;background:linear-gradient(90deg,#838383,#8d8d8d)"></div>

</body></html>
